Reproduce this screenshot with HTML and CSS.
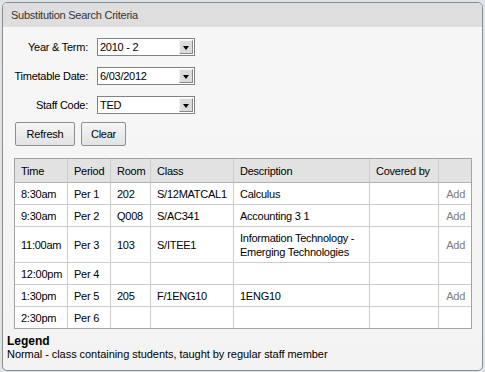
FILE: index.html
```html
<!DOCTYPE html>
<html>
<head>
<meta charset="utf-8">
<link rel="stylesheet" href="styles.css">
</head>
<body>
<div class="panel">
  <div class="panel-header">Substitution Search Criteria</div>
  <div class="panel-body">
    <div class="criteria">
      <label class="crit-label">Year &amp; Term:</label>
      <div class="combo"><span class="combo-value">2010 - 2</span><span class="combo-btn"><span class="tri"></span></span></div>
      <label class="crit-label">Timetable Date:</label>
      <div class="combo"><span class="combo-value">6/03/2012</span><span class="combo-btn"><span class="tri"></span></span></div>
      <label class="crit-label">Staff Code:</label>
      <div class="combo"><span class="combo-value">TED</span><span class="combo-btn"><span class="tri"></span></span></div>
    </div>
    <div class="actions">
      <button class="btn btn-refresh">Refresh</button>
      <button class="btn btn-clear">Clear</button>
    </div>
    <table class="subs">
      <thead>
        <tr>
          <th class="c-time">Time</th>
          <th class="c-period">Period</th>
          <th class="c-room">Room</th>
          <th class="c-class">Class</th>
          <th class="c-desc">Description</th>
          <th class="c-cov">Covered by</th>
          <th class="c-act"></th>
        </tr>
      </thead>
      <tbody>
        <tr>
          <td>8:30am</td><td>Per 1</td><td>202</td><td>S/12MATCAL1</td><td>Calculus</td><td></td><td class="act"><a class="add">Add</a></td>
        </tr>
        <tr>
          <td>9:30am</td><td>Per 2</td><td>Q008</td><td>S/AC341</td><td>Accounting 3 1</td><td></td><td class="act"><a class="add">Add</a></td>
        </tr>
        <tr class="tall">
          <td>11:00am</td><td>Per 3</td><td>103</td><td>S/ITEE1</td><td>Information Technology - Emerging Technologies</td><td></td><td class="act"><a class="add">Add</a></td>
        </tr>
        <tr>
          <td>12:00pm</td><td>Per 4</td><td></td><td></td><td></td><td></td><td class="act"></td>
        </tr>
        <tr>
          <td>1:30pm</td><td>Per 5</td><td>205</td><td>F/1ENG10</td><td>1ENG10</td><td></td><td class="act"><a class="add">Add</a></td>
        </tr>
        <tr class="last">
          <td>2:30pm</td><td>Per 6</td><td></td><td></td><td></td><td></td><td class="act"></td>
        </tr>
      </tbody>
    </table>
    <div class="legend">
      <div class="legend-title">Legend</div>
      <div class="legend-text">Normal - class containing students, taught by regular staff member</div>
    </div>
  </div>
</div>
</body>
</html>
```

FILE: styles.css
```css
html, body {
  margin: 0;
  padding: 0;
}
body {
  background: #dde3e6;
  font-family: "Liberation Sans", Arial, sans-serif;
  font-size: 11px;
  letter-spacing: -0.25px;
  color: #000;
  width: 485px;
  height: 372px;
  overflow: hidden;
}
.panel {
  margin: 2px 0 0 2px;
  width: 481px;
  box-sizing: border-box;
  border: 1px solid #8d8d8d;
  border-radius: 5px;
  overflow: hidden;
  background: linear-gradient(#f7f7f7, #f3f3f3);
}
.panel-header {
  height: 24px;
  line-height: 24px;
  background: #dedede;
  padding-left: 8px;
  color: #333;
  font-size: 11px;
}
.panel-body {
  padding: 11px 0 9px 0;
}
.criteria {
  display: grid;
  grid-template-columns: 74px 98px;
  grid-auto-rows: 18px;
  column-gap: 9px;
  row-gap: 11px;
  padding-left: 11px;
  align-items: center;
}
.crit-label {
  text-align: right;
  color: #000;
  white-space: nowrap;
  justify-self: end;
  line-height: 14px;
}
.combo {
  display: flex;
  align-items: center;
  height: 18px;
  box-sizing: border-box;
  border: 1px solid #828282;
  background: #fff;
}
.combo-value {
  flex: 1;
  padding-left: 2px;
  white-space: nowrap;
  line-height: 14px;
}
.combo-btn {
  width: 14px;
  height: 14px;
  margin-right: 1px;
  box-sizing: border-box;
  border: 1px solid;
  border-color: #f4f4f4 #8a8a8a #8a8a8a #f4f4f4;
  background: #dcdcdc;
  display: flex;
  align-items: center;
  justify-content: center;
}
.tri {
  width: 0;
  height: 0;
  border-left: 3.5px solid transparent;
  border-right: 3.5px solid transparent;
  border-top: 4px solid #000;
  margin-top: 2px;
}
.actions {
  display: flex;
  gap: 6px;
  padding-left: 12px;
  margin-top: 8px;
  height: 24px;
}
.btn {
  font-family: "Liberation Sans", Arial, sans-serif;
  font-size: 11px;
  letter-spacing: -0.25px;
  color: #000;
  height: 24px;
  padding: 0;
  border: 1px solid #8f8f8f;
  border-radius: 2px;
  background: linear-gradient(#f6f6f6, #e2e2e2);
  box-sizing: border-box;
}
.btn-refresh { width: 60px; }
.btn-clear { width: 45px; }
.subs {
  margin: 12px 0 0 11px;
  width: 458px;
  box-sizing: border-box;
  table-layout: fixed;
  border-collapse: separate;
  border-spacing: 0;
  border: 1px solid #a3a3a3;
  background: #fff;
}
.subs th, .subs td {
  box-sizing: border-box;
  padding: 0 6px;
  text-align: left;
  vertical-align: middle;
  border-right: 1px solid #cdcdcd;
  border-bottom: 1px solid #cdcdcd;
  line-height: 14px;
  font-weight: normal;
}
.subs th {
  height: 24px;
  background: #e2e2e2;
  border-bottom-color: #b5b5b5;
  white-space: nowrap;
}
.subs td { height: 22px; }
.subs tr.tall td { height: 36px; }
.subs tr.last td { height: 21px; border-bottom: none; }
.subs th:last-child, .subs td:last-child { border-right: none; }
.c-time { width: 53px; }
.c-period { width: 43px; }
.c-room { width: 40px; }
.c-class { width: 83px; }
.c-desc { width: 136px; }
.c-cov { width: 69px; }
.c-act { width: 32px; }
.subs td.act { text-align: right; padding-right: 6px; }
.add { color: #7c7c7c; }
.legend {
  margin-top: 5px;
  padding-left: 4px;
}
.legend-title {
  font-weight: bold;
  font-size: 12px;
  line-height: 14px;
  letter-spacing: 0;
}
.legend-text {
  line-height: 13px;
  letter-spacing: -0.05px;
}
```
